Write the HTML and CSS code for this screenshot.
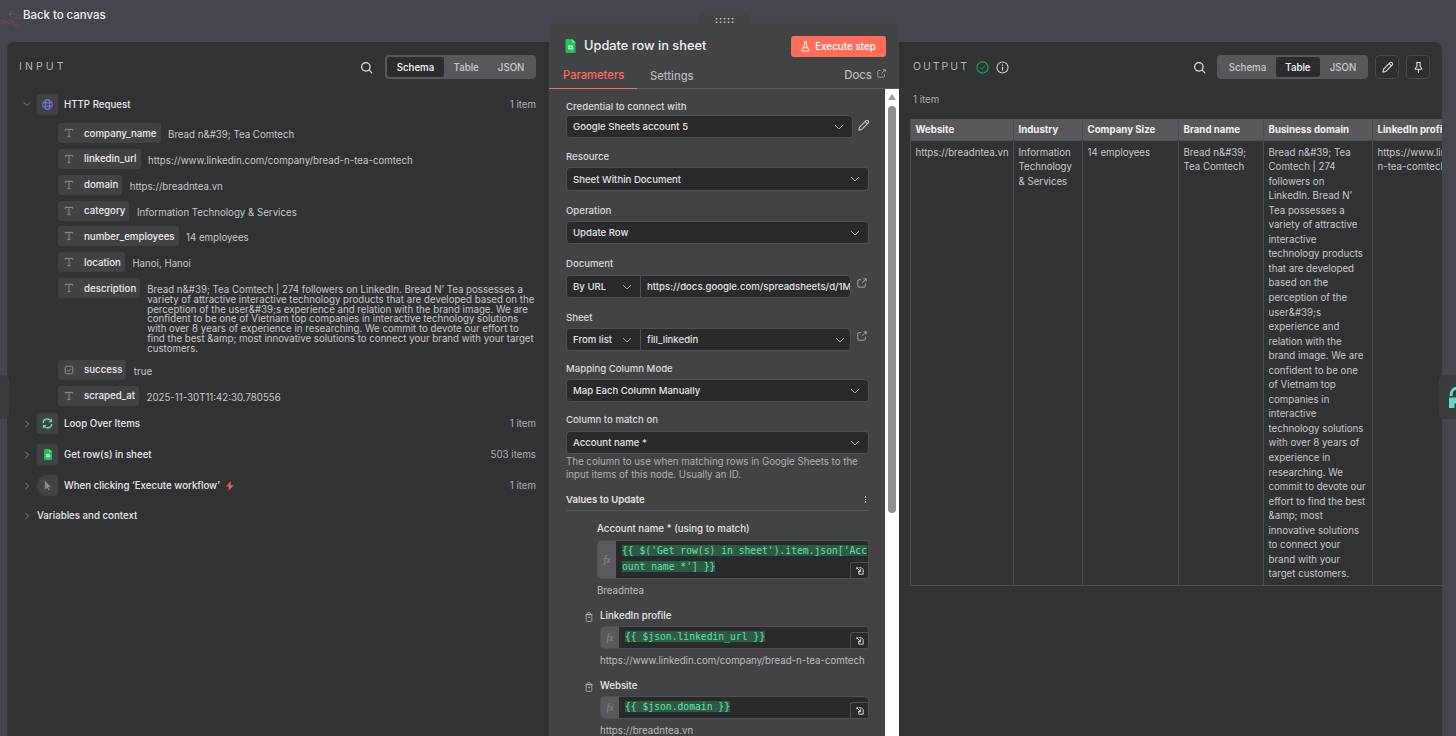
FILE: index.html
```html
<!DOCTYPE html>
<html lang="en">
<head>
<meta charset="utf-8">
<title>Update row in sheet</title>
<link rel="stylesheet" href="styles.css">
</head>
<body>
<svg class="sprites" width="0" height="0" aria-hidden="true">
  <symbol id="i-t" viewBox="0 0 12 12"><path d="M1.500 3.400V1.600h9v1.800M6 1.600v8.800M4.200 10.400h3.600" fill="none" stroke="currentColor" stroke-width="1"/></symbol>
  <symbol id="i-search" viewBox="0 0 14 14"><circle cx="6.300" cy="6.300" r="4.600" fill="none" stroke="currentColor" stroke-width="1.300"/><path d="M9.800 9.800l3 3" stroke="currentColor" stroke-width="1.300" fill="none" stroke-linecap="round"/></symbol>
  <symbol id="i-down" viewBox="0 0 10 10"><path d="M1 3l4 4 4-4" fill="none" stroke="currentColor" stroke-width="1"/></symbol>
  <symbol id="i-right" viewBox="0 0 10 10"><path d="M3 1l4 4-4 4" fill="none" stroke="currentColor" stroke-width="1"/></symbol>
  <symbol id="i-sheet" viewBox="0 0 10 14"><path d="M0 1.200C0 .5.5 0 1.200 0H6.500L10 3.500V12.800C10 13.500 9.500 14 8.800 14H1.200C.5 14 0 13.500 0 12.800z" fill="#22c35c"/><path d="M6.500 0L10 3.500H6.500z" fill="#8fdca9"/><rect x="2.800" y="6.500" width="4.400" height="3.800" fill="#fff"/><path d="M5 6.500v3.800M2.800 8.400h4.400" stroke="#22c35c" stroke-width=".6"/></symbol>
  <symbol id="i-ext" viewBox="0 0 12 12"><path d="M5 2H2.300C1.600 2 1 2.600 1 3.300v6.400C1 10.400 1.600 11 2.300 11h6.400c.7 0 1.300-.6 1.300-1.300V7M6 6.200L11 1M7.800 1H11v3.200" fill="none" stroke="currentColor" stroke-width="1"/></symbol>
  <symbol id="i-pencil" viewBox="0 0 14 14"><path d="M2 12l.8-3.200L9.800 1.800c.5-.5 1.300-.5 1.800 0l.6.600c.5.500.5 1.300 0 1.800L5.200 11.200zM8.800 2.800l2.400 2.400" fill="none" stroke="currentColor" stroke-width="1.100" stroke-linejoin="round"/></symbol>
  <symbol id="i-trash" viewBox="0 0 10 12"><path d="M1.500 3h7v7.500c0 .6-.4 1-1 1h-5c-.6 0-1-.4-1-1zM.5 3h9M3.300 3V1.200c0-.4.2-.7.600-.7h2.200c.4 0 .6.300.6.700V3M3.500 6.500h3" fill="none" stroke="currentColor" stroke-width=".9"/></symbol>
  <symbol id="i-switch" viewBox="0 0 10 10"><path d="M1 3v-2h2M3.500 1h3.300L9 3.200V9H3.500V5.500" fill="none" stroke="currentColor" stroke-width="1.100"/><path d="M.8 .8l4.700 4.700M5.800 2.800v3H2.800" fill="none" stroke="currentColor" stroke-width="1.100"/></symbol>
</svg>

<header class="topbar">
  <svg class="ghost-flow" viewBox="0 0 24 14" width="24" height="14"><g fill="none" stroke="#7a3f5e" stroke-width="1"><circle cx="3" cy="8" r="2"/><circle cx="10" cy="8" r="2"/><circle cx="18" cy="3" r="2"/><circle cx="18" cy="12" r="2"/><path d="M5 8h3M12 8c3 0 2-5 4-5M12 8c3 0 2 4 4 4"/></g></svg>
  <svg class="back-arrow" viewBox="0 0 10 10" width="10" height="10"><path d="M9 5H1M4.500 1.500L1 5l3.500 3.500" fill="none" stroke="#5d5d68" stroke-width="1"/></svg>
  <span class="back-text">Back to canvas</span>
</header>

<main class="stage">
  <section class="panel panel-input">
    <div class="panel-head">
      <h2 class="panel-title">INPUT</h2>
      <svg class="search-icon"><use href="#i-search"/></svg>
      <div class="seg">
        <span class="seg-item is-on">Schema</span><span class="seg-item">Table</span><span class="seg-item">JSON</span>
      </div>
    </div>

    <div class="node-row node-first">
      <svg class="chev"><use href="#i-down"/></svg>
      <span class="node-icon"><svg width="11" height="11" viewBox="0 0 12 12"><g fill="none" stroke="#7d7dff" stroke-width="1"><circle cx="6" cy="6" r="5.200"/><ellipse cx="6" cy="6" rx="2.400" ry="5.200"/><path d="M1 4.200h10M1 7.800h10"/></g></svg></span>
      <span class="node-name">HTTP Request</span>
      <span class="node-count">1 item</span>
    </div>

    <div class="field"><span class="pill"><svg class="pill-icon"><use href="#i-t"/></svg>company_name</span><span class="val">Bread n&amp;#39; Tea Comtech</span></div>
    <div class="field"><span class="pill"><svg class="pill-icon"><use href="#i-t"/></svg>linkedin_url</span><span class="val">https://www.linkedin.com/company/bread-n-tea-comtech</span></div>
    <div class="field"><span class="pill"><svg class="pill-icon"><use href="#i-t"/></svg>domain</span><span class="val">https://breadntea.vn</span></div>
    <div class="field"><span class="pill"><svg class="pill-icon"><use href="#i-t"/></svg>category</span><span class="val">Information Technology &amp; Services</span></div>
    <div class="field"><span class="pill"><svg class="pill-icon"><use href="#i-t"/></svg>number_employees</span><span class="val">14 employees</span></div>
    <div class="field"><span class="pill"><svg class="pill-icon"><use href="#i-t"/></svg>location</span><span class="val">Hanoi, Hanoi</span></div>
    <div class="field field-long"><span class="pill"><svg class="pill-icon"><use href="#i-t"/></svg>description</span><span class="val val-long">Bread n&amp;#39; Tea Comtech | 274 followers on LinkedIn. Bread N’ Tea possesses a variety of attractive interactive technology products that are developed based on the perception of the user&amp;#39;s experience and relation with the brand image. We are confident to be one of Vietnam top companies in interactive technology solutions with over 8 years of experience in researching. We commit to devote our effort to find the best &amp;amp; most innovative solutions to connect your brand with your target customers.</span></div>
    <div class="field"><span class="pill"><svg class="pill-icon" viewBox="0 0 12 12"><rect x="1.500" y="1.500" width="9" height="9" rx="1.500" fill="none" stroke="currentColor"/><path d="M4 6l1.500 1.500L8 5" fill="none" stroke="currentColor"/></svg>success</span><span class="val">true</span></div>
    <div class="field"><span class="pill"><svg class="pill-icon"><use href="#i-t"/></svg>scraped_at</span><span class="val">2025-11-30T11:42:30.780556</span></div>

    <div class="node-row node-loop">
      <svg class="chev"><use href="#i-right"/></svg>
      <span class="node-icon"><svg width="11" height="11" viewBox="0 0 12 12"><g fill="none" stroke="#55e0b4" stroke-width="1.600"><path d="M1.200 5.200C1.600 2.800 3.600 1.200 6 1.200c1.500 0 2.800.6 3.700 1.700M10.800 6.800C10.400 9.200 8.400 10.800 6 10.800c-1.500 0-2.800-.6-3.700-1.700"/></g><path d="M11 .5v4H7zM1 11.500v-4h4z" fill="#55e0b4"/></svg></span>
      <span class="node-name">Loop Over Items</span>
      <span class="node-count">1 item</span>
    </div>
    <div class="node-row">
      <svg class="chev"><use href="#i-right"/></svg>
      <span class="node-icon"><svg width="8" height="11"><use href="#i-sheet"/></svg></span>
      <span class="node-name">Get row(s) in sheet</span>
      <span class="node-count">503 items</span>
    </div>
    <div class="node-row">
      <svg class="chev"><use href="#i-right"/></svg>
      <span class="node-icon node-icon-round"><svg width="9" height="11" viewBox="0 0 9 12"><path d="M1.500 .5v10l2.500-2.200 1.500 3.200 1.500-.8-1.500-3h3z" fill="#8a8a8f"/></svg></span>
      <span class="node-name">When clicking ‘Execute workflow’</span>
      <svg class="bolt" width="8" height="10" viewBox="0 0 8 10"><path d="M5 0L0 5.600h3L2.400 10 8 4.200H4.600z" fill="#e8604f"/></svg>
      <span class="node-count">1 item</span>
    </div>
    <div class="node-row node-vars">
      <svg class="chev"><use href="#i-right"/></svg>
      <span class="node-name">Variables and context</span>
    </div>
  </section>

  <section class="panel-center">
    <span class="grip">:::::</span>
    <div class="center-head">
      <svg class="title-icon"><use href="#i-sheet"/></svg>
      <h1 class="center-title">Update row in sheet</h1>
      <button class="exec-btn"><svg width="9" height="11" viewBox="0 0 10 12"><path d="M3.500 .8h3M4 .8v3.700L1 10c-.3.600.1 1.200.8 1.200h6.400c.7 0 1.100-.6.800-1.200L6 4.500V.8M2.500 7.500h5" fill="none" stroke="#fff" stroke-width="1"/></svg>Execute step</button>
    </div>
    <div class="tabs">
      <span class="tab tab-on">Parameters</span>
      <span class="tab">Settings</span>
      <span class="docs">Docs<svg class="docs-icon"><use href="#i-ext"/></svg></span>
    </div>
    <div class="center-body">
      <div class="form">
        <label class="lbl lbl-first">Credential to connect with</label>
        <div class="line">
          <div class="select sel-cred"><span>Google Sheets account 5</span><svg class="caret"><use href="#i-down"/></svg></div>
          <svg class="pencil"><use href="#i-pencil"/></svg>
        </div>
        <label class="lbl lbl-res">Resource</label>
        <div class="select select-tall"><span>Sheet Within Document</span><svg class="caret"><use href="#i-down"/></svg></div>
        <label class="lbl lbl-op">Operation</label>
        <div class="select"><span>Update Row</span><svg class="caret"><use href="#i-down"/></svg></div>
        <label class="lbl lbl-doc">Document</label>
        <div class="line">
          <div class="combo">
            <div class="combo-left"><span>By URL</span><svg class="caret"><use href="#i-down"/></svg></div>
            <div class="combo-right"><span class="clip">https://docs.google.com/spreadsheets/d/1M</span></div>
          </div>
          <svg class="ext"><use href="#i-ext"/></svg>
        </div>
        <label class="lbl lbl-op">Sheet</label>
        <div class="line">
          <div class="combo">
            <div class="combo-left"><span>From list</span><svg class="caret"><use href="#i-down"/></svg></div>
            <div class="combo-right"><span>fill_linkedin</span><svg class="caret"><use href="#i-down"/></svg></div>
          </div>
          <svg class="ext"><use href="#i-ext"/></svg>
        </div>
        <label class="lbl lbl-map">Mapping Column Mode</label>
        <div class="select"><span>Map Each Column Manually</span><svg class="caret"><use href="#i-down"/></svg></div>
        <label class="lbl lbl-col">Column to match on</label>
        <div class="select"><span>Account name *</span><svg class="caret"><use href="#i-down"/></svg></div>
        <p class="hint">The column to use when matching rows in Google Sheets to the input items of this node. Usually an ID.</p>
        <div class="values-head"><span>Values to Update</span><span class="dots"><i></i><i></i><i></i></span></div>

        <div class="map map-first">
          <label class="map-lbl">Account name * (using to match)</label>
          <div class="expr expr-tall">
            <span class="fx">fx</span>
            <div class="code"><span class="hl">{{ $('Get row(s) in sheet').item.json['Acc</span><br><span class="hl">ount name *'] }}</span></div>
            <span class="switch"><svg><use href="#i-switch"/></svg></span>
          </div>
          <div class="map-val">Breadntea</div>
        </div>
        <div class="map map-row">
          <svg class="trash"><use href="#i-trash"/></svg>
          <label class="map-lbl">LinkedIn profile</label>
          <div class="expr">
            <span class="fx">fx</span>
            <div class="code"><span class="hl">{{ $json.linkedin_url }}</span></div>
            <span class="switch"><svg><use href="#i-switch"/></svg></span>
          </div>
          <div class="map-val">https://www.linkedin.com/company/bread-n-tea-comtech</div>
        </div>
        <div class="map map-row">
          <svg class="trash"><use href="#i-trash"/></svg>
          <label class="map-lbl">Website</label>
          <div class="expr">
            <span class="fx">fx</span>
            <div class="code"><span class="hl">{{ $json.domain }}</span></div>
            <span class="switch"><svg><use href="#i-switch"/></svg></span>
          </div>
          <div class="map-val">https://breadntea.vn</div>
        </div>
      </div>
      <div class="scrollbar">
        <span class="sb-up"></span>
        <span class="sb-thumb"></span>
      </div>
    </div>
  </section>

  <section class="panel panel-output">
    <div class="panel-head">
      <h2 class="panel-title">OUTPUT</h2>
      <svg class="status" width="13" height="13" viewBox="0 0 14 14"><circle cx="7" cy="7" r="6" fill="none" stroke="#1fa85c" stroke-width="1.200"/><path d="M4.500 7l1.800 1.800L9.500 5.600" fill="none" stroke="#1fa85c" stroke-width="1"/></svg>
      <svg class="status" width="13" height="13" viewBox="0 0 14 14"><circle cx="7" cy="7" r="6" fill="none" stroke="#d6d6d8" stroke-width="1.100"/><path d="M7 6.200v4M7 3.800v1.200" stroke="#d6d6d8" stroke-width="1.200"/></svg>
      <svg class="search-icon"><use href="#i-search"/></svg>
      <div class="seg seg-out">
        <span class="seg-item">Schema</span><span class="seg-item is-on">Table</span><span class="seg-item">JSON</span>
      </div>
      <span class="tool-btn"><svg><use href="#i-pencil"/></svg></span>
      <span class="tool-btn"><svg viewBox="0 0 14 14"><path d="M4.500 1.500h5M5.300 1.500v4.300L3.500 8v1h7V8L8.700 5.800V1.500M7 9v4" fill="none" stroke="currentColor" stroke-width="1.100"/></svg></span>
    </div>
    <div class="out-count">1 item</div>
    <div class="table-wrap">
      <table class="tbl">
        <colgroup><col class="c1"><col class="c2"><col class="c3"><col class="c4"><col class="c5"><col class="c6"></colgroup>
        <thead><tr><th>Website</th><th>Industry</th><th>Company Size</th><th>Brand name</th><th>Business domain</th><th>LinkedIn profile</th></tr></thead>
        <tbody><tr>
          <td>https://breadntea.vn</td>
          <td>Information Technology &amp; Services</td>
          <td>14 employees</td>
          <td>Bread n&amp;#39; Tea Comtech</td>
          <td>Bread n&amp;#39; Tea Comtech | 274 followers on LinkedIn. Bread N’ Tea possesses a variety of attractive interactive technology products that are developed based on the perception of the user&amp;#39;s experience and relation with the brand image. We are confident to be one of Vietnam top companies in interactive technology solutions with over 8 years of experience in researching. We commit to devote our effort to find the best &amp;amp; most innovative solutions to connect your brand with your target customers.</td>
          <td>https://www.linkedin.com/company/bread-n-tea-comtech</td>
        </tr></tbody>
      </table>
    </div>
  </section>
</main>

<span class="handle handle-left"></span>
<span class="handle handle-right"><svg width="14" height="22" viewBox="0 0 14 22"><path d="M2 10C2 5 5 2 9 2s5 3 5 3M1 21v-8h5v3H4v5z" fill="none" stroke="#62dcc0" stroke-width="3"/></svg></span>
</body>
</html>
```
FILE: styles.css
```css
* { box-sizing: border-box; }
html, body { margin: 0; height: 100%; }
body {
  position: relative;
  width: 1456px;
  height: 736px;
  overflow: hidden;
  background: #45454f;
  color: #e4e4e6;
  font-family: Inter, "Liberation Sans", sans-serif;
  font-size: 9.700px;
  display: flex;
  flex-direction: column;
}
.sprites { position: absolute; }
svg { display: block; flex: none; }

.topbar { height: 42px; flex: none; display: flex; align-items: flex-start; position: relative; padding: 8px 0 0 23px; }
.back-text { font-size: 11.400px; font-weight: 500; color: #f2f2f4; line-height: 14px; }
.ghost-flow { position: absolute; left: 0; top: 14px; }
.back-arrow { position: absolute; left: 8px; top: 9px; }

.stage { flex: 1; display: flex; padding-left: 7px; min-height: 0; }
.panel { background: #313234; border-radius: 7px 0 0 0; overflow: hidden; flex: none; }
.panel-input { width: 542px; padding: 0 13px 0 12px; }
.panel-output { width: 543px; border-radius: 0 7px 0 0; padding-left: 14px; }

.panel-head { height: 49px; display: flex; align-items: center; padding-top: 1px; }
.panel-title { margin: 0; flex: 1; font-size: 10.500px; font-weight: 400; letter-spacing: 3.100px; color: #b4b4b8; line-height: 14px; }
.panel-output .panel-title { flex: none; letter-spacing: 2px; }
.search-icon { width: 13px; height: 13px; color: #e4e4e6; margin-right: 12px; }
.panel-output .search-icon { margin-left: auto; margin-right: 11px; }
.status { margin-left: 7px; }

.seg { display: flex; height: 24px; background: #58585c; border-radius: 4px; padding: 2px; width: 151px; }
.seg-item { display: flex; align-items: center; justify-content: center; font-size: 9.700px; font-weight: 500; color: #c9c9cc; border-radius: 3px; flex: 1 1 auto; }
.seg-item.is-on { background: #2c2c2e; color: #fafafa; flex: none; width: 57px; }
.seg-out .is-on { width: 44px; }
.tool-btn { width: 24px; height: 24px; margin-left: 7px; border: 1px solid #48484c; border-radius: 4px; background: #2e2e30; display: flex; align-items: center; justify-content: center; color: #e4e4e6; }
.tool-btn svg { width: 13px; height: 13px; }
.panel-output .tool-btn:last-child { margin-right: 12px; }

.node-row { height: 30.800px; display: flex; align-items: center; position: relative; }
.node-first { height: 22px; margin: 2px 0 8px; }
.node-loop { margin-top: -3px; }
.chev { width: 8px; height: 8px; margin: 0 6px 0 4px; color: #a5a5a9; }
.node-icon { width: 21px; height: 21px; background: #424245; border-radius: 3px; display: flex; align-items: center; justify-content: center; margin-right: 6px; }
.node-icon-round { border-radius: 10px 3px 3px 10px; }
.node-name { font-weight: 500; color: #e8e8ea; font-size: 9.700px; }
.node-count { margin-left: auto; color: #b0b0b4; font-size: 9.700px; }
.bolt { margin-left: 6px; }
.node-vars { height: 30px; }

.field { display: flex; align-items: flex-start; margin-left: 39px; margin-bottom: 5.850px; height: 20px; }
.field-long { height: 76px; }
.pill { height: 20px; display: flex; align-items: center; background: #424245; border-radius: 3px; padding: 0 4px 0 0; font-size: 9.700px; font-weight: 500; color: #ececee; white-space: nowrap; flex: none; }
.pill-icon { width: 10px; height: 10px; margin: 0 10px 0 6px; color: #9c9ca0; }
.val { margin-left: 7.500px; height: 20px; line-height: 23.500px; font-size: 9.700px; color: #c8c8cb; }
.val-long { height: auto; line-height: 9.800px; padding-top: 7px; flex: 1; margin-left: 7px; }

.panel-center {
  width: 350px;
  flex: none;
  margin-top: -19px;
  position: relative;
  z-index: 2;
  background: #424345;
  border-radius: 7px 7px 0 0;
  display: flex;
  flex-direction: column;
}
.grip { position: absolute; left: 150px; top: -10px; width: 52px; height: 10px; background: #424345; border-radius: 5px 5px 0 0; text-align: center; font-size: 9px; line-height: 14px; letter-spacing: 1px; color: #d8d8d8; font-weight: 700; }
.center-head { height: 39px; flex: none; display: flex; align-items: center; padding: 6px 13px 0 16px; }
.title-icon { width: 11px; height: 14px; margin-right: 8px; }
.center-title { margin: 0; font-size: 12.800px; font-weight: 500; color: #f0f0f2; flex: 1; }
.exec-btn { height: 21px; width: 95px; margin-top: 1px; border: 0; border-radius: 3px; background: #ff6d5a; color: #fff; font: 500 9.850px Inter, "Liberation Sans", sans-serif; display: flex; align-items: center; justify-content: center; gap: 5px; padding: 0; }
.tabs { height: 27px; flex: none; display: flex; align-items: stretch; border-bottom: 1px solid #5a5a5e; font-size: 11.200px; }
.tab { display: flex; align-items: center; padding: 0 14px 0; font-weight: 500; color: #b9b9be; margin-bottom: -1px; }
.tab-on { color: #ff6d5a; border-bottom: 1px solid #ff6d5a; width: 88px; }
.tab + .tab { padding-left: 13px; }
.docs { margin-left: auto; display: flex; align-items: center; gap: 5px; padding: 0 13px 0 0; color: #b9b9be; font-size: 11.400px; font-weight: 500; }
.docs-icon { width: 9px; height: 9px; margin-top: -3px; }

.center-body { flex: 1; display: flex; min-height: 0; overflow: hidden; }
.form { width: 336px; padding: 0 16px 0 17px; overflow: hidden; }
.scrollbar { width: 14px; background: #fff; margin-top: -1px; position: relative; padding: 0 3px; }
.sb-up { display: block; width: 0; height: 0; border: 4px solid transparent; border-top: 0; border-bottom: 6px solid #9a9a9a; margin: 6px auto 0; }
.sb-thumb { display: block; height: 407px; margin-top: 6px; background: #8f8f8f; border-radius: 4px; }

.lbl { display: block; font-size: 9.600px; font-weight: 500; color: #dadadd; line-height: 13px; margin-bottom: 4px; }
.lbl-first { margin-top: 11px; margin-bottom: 2px; }
.lbl-res { margin-top: 12px; }
.lbl-op { margin-top: 13px; }
.lbl-doc { margin-top: 13px; margin-bottom: 5px; }
.lbl-map { margin-top: 11px; }
.lbl-col { margin-top: 11px; margin-bottom: 5px; }
.line { display: flex; align-items: flex-start; }
.select { height: 23px; border: 1px solid #505054; border-radius: 4px; background: #2a2a2c; display: flex; align-items: center; justify-content: space-between; padding: 0 8px 0 6px; font-size: 9.600px; font-weight: 500; color: #e2e2e4; }
.select-tall { height: 24px; }
.sel-cred { width: 287px; flex: none; }
.caret { width: 10px; height: 10px; color: #a9a9ad; }
.pencil { width: 13px; height: 13px; margin: 4px 0 0 4px; color: #c9c9cc; }
.combo { width: 285px; height: 23px; display: flex; border: 1px solid #505054; border-radius: 4px; background: #2a2a2c; overflow: hidden; font-size: 9.600px; font-weight: 500; color: #e2e2e4; flex: none; }
.combo-left { width: 74px; flex: none; display: flex; align-items: center; justify-content: space-between; padding: 0 8px 0 6px; border-right: 1px solid #505054; }
.combo-right { flex: 1; min-width: 0; display: flex; align-items: center; justify-content: space-between; padding: 0 5px 0 6px; overflow: hidden; }
.clip { white-space: nowrap; }
.ext { width: 10px; height: 10px; margin: 3px 0 0 6px; color: #b8b8bc; }
.hint { margin: 1px 0 0; font-size: 9.700px; line-height: 13px; color: #b0b0b4; }
.values-head { margin-top: 12px; height: 18px; display: flex; justify-content: space-between; align-items: flex-start; border-bottom: 1px solid #55555a; font-size: 9.600px; font-weight: 600; color: #e2e2e4; line-height: 13px; }
.dots { display: flex; flex-direction: column; gap: 1px; padding: 3px 3px 0 0; }
.dots i { display: block; width: 1.500px; height: 1.500px; background: #c4c4c8; }

.map { position: relative; }
.map-first { margin-left: 31px; margin-top: 11px; }
.map-row { margin-left: 34px; margin-top: 12px; }
.map-lbl { display: block; font-size: 9.700px; font-weight: 500; color: #e6e6e8; line-height: 13px; margin-bottom: 4px; }
.map-first .map-lbl { margin-bottom: 5px; }
.map-val { font-size: 9.700px; line-height: 13px; color: #bcbcc0; margin-top: 5px; white-space: nowrap; }
.trash { position: absolute; left: -15px; top: 3px; width: 8px; height: 10px; color: #c4c4c8; }
.expr { height: 23px; display: flex; border: 1px solid #505054; border-radius: 4px; background: #2a2a2c; overflow: hidden; position: relative; }
.expr-tall { height: 39px; }
.fx { width: 18px; flex: none; background: #5a5a5e; color: #8e8e92; font: italic 10px "Liberation Serif", serif; display: flex; align-items: center; justify-content: center; }
.code { font: 9.700px/16px "DejaVu Sans Mono", monospace; color: #63e2a4; padding: 2px 0 0 6px; white-space: nowrap; }
.hl { background: #2d5a45; }
.switch { position: absolute; right: 0; bottom: 0; width: 18px; height: 16px; background: #2a2a2c; border: 1px solid #505054; border-width: 1px 0 0 1px; border-radius: 3px 0 0 0; display: flex; align-items: center; justify-content: center; color: #e8e8ec; }
.switch svg { width: 8px; height: 8px; }

.out-count { color: #b0b0b4; font-size: 9.700px; line-height: 13px; margin: 2px 0 13px; }
.table-wrap { margin-left: -3px; overflow: hidden; }
.tbl { border-collapse: collapse; table-layout: fixed; width: 677px; font-size: 9.700px; color: #c8c8cb; }
.c1 { width: 103px; } .c2 { width: 69px; } .c3 { width: 96px; } .c4 { width: 85px; } .c5 { width: 109px; } .c6 { width: 215px; }
.tbl th { height: 21px; background: #58585c; text-align: left; padding: 0 5px 0 4.500px; font-weight: 700; color: #f0f0f2; white-space: nowrap; border-left: 1px solid #4a4a4e; overflow: hidden; }
.tbl td { vertical-align: top; padding: 5px 5.500px 3px 4.500px; line-height: 14.550px; border: 1px solid #4e4e52; overflow: hidden; }

.handle { position: absolute; top: 375px; height: 44px; background: #3c3c40; }
.handle-left { left: 0; width: 9px; border-radius: 0 5px 5px 0; }
.handle-right { left: 1439px; width: 17px; border-radius: 5px 0 0 5px; padding: 11px 0 0 10px; overflow: hidden; }
```
